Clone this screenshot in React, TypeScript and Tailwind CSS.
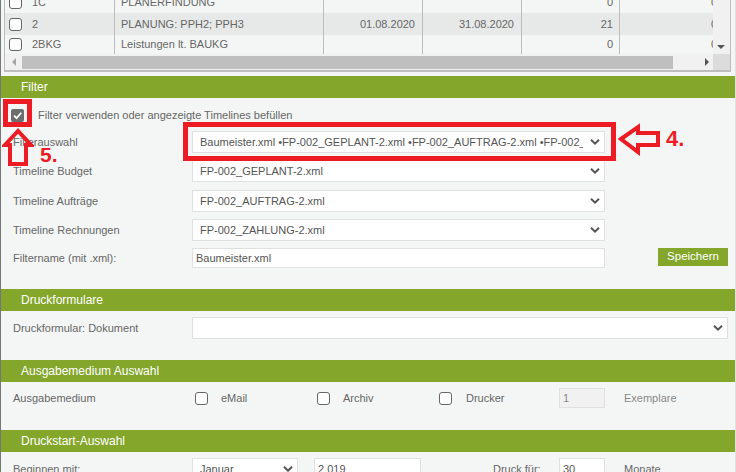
import { ReactNode } from "react";

const rows = [
  { code: "1C", name: "PLANERFINDUNG", from: "", to: "", a: "0", b: "0", odd: false, h: "h-[22px]" },
  { code: "2", name: "PLANUNG: PPH2; PPH3", from: "01.08.2020", to: "31.08.2020", a: "21", b: "0", odd: true, h: "h-[22px]" },
  { code: "2BKG", name: "Leistungen lt. BAUKG", from: "", to: "", a: "0", b: "0", odd: false, h: "h-[19px]" },
];

function Chevron() {
  return (
    <svg
      viewBox="0 0 10 7"
      className="pointer-events-none absolute right-[5px] top-1/2 h-[7px] w-[10px] -translate-y-1/2"
    >
      <path d="M1 1.2 5 5.2 9 1.2" fill="none" stroke="#555" strokeWidth="2" />
    </svg>
  );
}

function Select({ value, className }: { value: string; className: string }) {
  return (
    <div className={`relative h-[22px] ${className}`}>
      <select
        defaultValue={value}
        className="h-full w-full appearance-none border border-[#dfe1e0] bg-white pl-[7px] pr-[21px] text-[11px] text-[#555]"
      >
        <option>{value}</option>
      </select>
      <Chevron />
    </div>
  );
}

function Header({ children }: { children: ReactNode }) {
  return (
    <div className="flex h-[22px] items-center bg-[#83a62b] pl-[20px] text-[12px] font-medium text-white">
      {children}
    </div>
  );
}

function Check({ className = "" }: { className?: string }) {
  return <span className={`block h-[13px] w-[13px] shrink-0 rounded-[3px] border border-[#666] bg-white ${className}`} />;
}

function Row({ label, children, className = "" }: { label: string; children: ReactNode; className?: string }) {
  return (
    <div className={`flex items-center pl-[12px] ${className}`}>
      <span className="w-[179px] shrink-0">{label}</span>
      {children}
    </div>
  );
}

export default function App() {
  return (
    <div className="relative h-[472px] w-[736px] overflow-hidden border-x border-l-[#777] border-r-[#dfe1e0] bg-[#f4f6f5] font-['Liberation_Sans',Arial,sans-serif] text-[11px] text-[#666]">
      {/* table stub at the top */}
      <div className="ml-[3px] mr-[4px] h-[72px] overflow-hidden border-x border-b-2 border-[#bdbdbd] border-t-0">
        <div className="flex h-[54px]">
          <div className="flex h-full flex-1 flex-col justify-end overflow-hidden">
            {rows.map((r) => (
              <div key={r.code} className={`flex shrink-0 items-center ${r.h} ${r.odd ? "bg-[#e7e9e8]" : ""}`}>
                <span className="flex w-[110px] shrink-0 items-center self-stretch border-r border-[#bdbdbd]">
                  <Check className="ml-[4px]" />
                  <span className="ml-[10px]">{r.code}</span>
                </span>
                <span className="flex w-[209px] shrink-0 items-center self-stretch border-r border-[#bdbdbd] pl-[6px]">
                  {r.name}
                </span>
                <span className="flex w-[99px] shrink-0 items-center justify-end self-stretch border-r border-[#bdbdbd] pr-[7px]">
                  {r.from}
                </span>
                <span className="flex w-[99px] shrink-0 items-center justify-end self-stretch border-r border-[#bdbdbd] pr-[7px]">
                  {r.to}
                </span>
                <span className="flex w-[98px] shrink-0 items-center justify-end self-stretch border-r border-[#bdbdbd] pr-[6px]">
                  {r.a}
                </span>
                <span className="flex h-full flex-1 items-center justify-end overflow-hidden">
                  <span className="-mr-[4px]">{r.b}</span>
                </span>
              </div>
            ))}
          </div>
          <div className="relative w-[17px] shrink-0 bg-[#f1f1f1]">
            <span className="absolute bottom-[5px] left-[4px] h-0 w-0 border-x-[4px] border-t-[4px] border-x-transparent border-t-[#555]" />
          </div>
        </div>
        <div className="flex h-[16px]">
          <div className="flex flex-1 items-center bg-[#f1f1f1]">
            <span className="ml-[7px] h-0 w-0 border-y-[4px] border-r-[4px] border-y-transparent border-r-[#a5a5a5]" />
            <span className="ml-[6px] h-[13px] w-[651px] bg-[#bfbfbf]" />
            <span className="ml-[32px] h-0 w-0 border-y-[4px] border-l-[4px] border-y-transparent border-l-[#555]" />
          </div>
          <div className="w-[17px] shrink-0 bg-[#dcdcdc]" />
        </div>
      </div>

      <div className="mt-[4px]">
        <Header>Filter</Header>
      </div>
      <div className="flex h-[33px] items-center pt-[1px]">
        <span className="ml-[10px] flex h-[13px] w-[13px] items-center justify-center rounded-[2px] bg-[#6e6e6e]">
          <svg viewBox="0 0 12 12" className="h-[11px] w-[11px]">
            <path d="M2.2 6.2 5 9l5-6" fill="none" stroke="#fff" strokeWidth="2" />
          </svg>
        </span>
        <span className="ml-[14px]">Filter verwenden oder angezeigte Timelines befüllen</span>
      </div>
      <div className="flex flex-col gap-[7px]">
        <Row label="Filterauswahl">
          <Select
            className="w-[413px]"
            value="Baumeister.xml •FP-002_GEPLANT-2.xml •FP-002_AUFTRAG-2.xml •FP-002_ZAHLUNG-2.xml"
          />
        </Row>
        <Row label="Timeline Budget">
          <Select className="w-[413px]" value="FP-002_GEPLANT-2.xml" />
        </Row>
        <Row label="Timeline Aufträge" className="mt-[1px]">
          <Select className="w-[413px]" value="FP-002_AUFTRAG-2.xml" />
        </Row>
        <Row label="Timeline Rechnungen">
          <Select className="w-[413px]" value="FP-002_ZAHLUNG-2.xml" />
        </Row>
        <Row label="Filtername (mit .xml):">
          <input
            defaultValue="Baumeister.xml"
            className="h-[20px] w-[413px] border border-[#dfe1e0] bg-white pl-[3px] text-[#555] outline-none"
          />
          <button className="ml-[53px] h-[18px] w-[70px] self-start bg-[#83a62b] text-[11.5px] font-medium text-white">
            Speichern
          </button>
        </Row>
      </div>

      <div className="mt-[21px]">
        <Header>Druckformulare</Header>
      </div>
      <div className="mt-[6px]">
        <Row label="Druckformular: Dokument">
          <Select className="w-[536px]" value="" />
        </Row>
      </div>

      <div className="mt-[21px]">
        <Header>Ausgabemedium Auswahl</Header>
      </div>
      <div className="mt-[6px] h-[20px]">
        <Row label="Ausgabemedium" className="h-full">
          <Check className="ml-[3px]" />
          <span className="ml-[13px] w-[96px]">eMail</span>
          <Check />
          <span className="ml-[13px] w-[96px]">Archiv</span>
          <Check />
          <span className="ml-[14px] w-[93px]">Drucker</span>
          <input
            disabled
            defaultValue="1"
            className="h-[20px] w-[46px] border border-[#dfe1e0] bg-[#f0f1f0] pl-[3px] text-[#888]"
          />
          <span className="ml-[19px] text-[#888]">Exemplare</span>
        </Row>
      </div>

      <div className="mt-[22px]">
        <Header>Druckstart-Auswahl</Header>
      </div>
      <div className="mt-[6px]">
        <Row label="Beginnen mit:">
          <Select className="w-[106px]" value="Januar" />
          <input
            defaultValue="2 019"
            className="ml-[16px] h-[22px] w-[107px] border border-[#dfe1e0] bg-white pl-[3px] text-[#555]"
          />
          <span className="ml-[72px] w-[66px]">Druck für:</span>
          <input
            defaultValue="30"
            className="h-[22px] w-[46px] border border-[#dfe1e0] bg-white pl-[3px] text-[#555]"
          />
          <span className="ml-[19px]">Monate</span>
        </Row>
      </div>

      {/* red markup drawn over the screenshot */}
      <div className="absolute left-[2px] top-[99px] h-[28px] w-[29px] border-[5px] border-[#ed1c24]" />
      <div className="absolute left-[182px] top-[122px] h-[39px] w-[433px] border-[5px] border-[#ed1c24]" />
      <svg className="absolute left-[1px] top-[128px] h-[39px] w-[32px]" viewBox="0 0 32 39">
        <path d="M16 3 3 17H8V36H24V17H29Z" fill="none" stroke="#ed1c24" strokeWidth="4" />
      </svg>
      <svg className="absolute left-[615px] top-[123px] h-[33px] w-[46px]" viewBox="0 0 46 33">
        <path d="M5 16 22 4V10H42V22H22V29Z" fill="none" stroke="#ed1c24" strokeWidth="4" />
      </svg>
      <span className="absolute left-[39px] top-[147px] text-[21px] font-bold leading-[16px] text-[#ed1c24]">5.</span>
      <span className="absolute left-[665px] top-[131px] text-[22px] font-bold leading-[16px] text-[#ed1c24]">4.</span>
    </div>
  );
}
